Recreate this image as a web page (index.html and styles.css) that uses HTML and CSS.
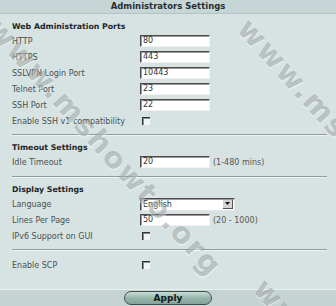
FILE: index.html
```html
<!DOCTYPE html>
<html>
<head>
<meta charset="utf-8">
<link rel="stylesheet" href="styles.css">
</head>
<body>
<div class="page">
  <div class="header">Administrators Settings</div>
  <div class="content">
    <div class="section first">
      <div class="heading">Web Administration Ports</div>
      <div class="row"><span class="label">HTTP</span><span class="input">80</span></div>
      <div class="row"><span class="label">HTTPS</span><span class="input">443</span></div>
      <div class="row"><span class="label">SSLVPN Login Port</span><span class="input">10443</span></div>
      <div class="row"><span class="label">Telnet Port</span><span class="input">23</span></div>
      <div class="row"><span class="label">SSH Port</span><span class="input">22</span></div>
      <div class="row"><span class="label">Enable SSH v1 compatibility</span><span class="check"></span></div>
    </div>
    <div class="divider d1"></div>
    <div class="section">
      <div class="heading">Timeout Settings</div>
      <div class="row"><span class="label">Idle Timeout</span><span class="input">20</span><span class="hint">(1-480 mins)</span></div>
    </div>
    <div class="divider d2"></div>
    <div class="section">
      <div class="heading">Display Settings</div>
      <div class="row"><span class="label">Language</span><span class="select"><span class="sel-text">English</span><span class="sel-btn"><svg width="5" height="3" viewBox="0 0 5 3"><path d="M0 0H5L2.5 3Z" fill="#111"/></svg></span></span></div>
      <div class="row"><span class="label">Lines Per Page</span><span class="input">50</span><span class="hint">(20 - 1000)</span></div>
      <div class="row"><span class="label">IPv6 Support on GUI</span><span class="check"></span></div>
    </div>
    <div class="divider d3"></div>
    <div class="section">
      <div class="row"><span class="label">Enable SCP</span><span class="check"></span></div>
    </div>
  </div>
  <div class="footer"><button class="apply">Apply</button></div>
  <div class="wm wm1">www.mshowto.org</div>
  <div class="wm wm2">www.mshowto.org</div>
  <div class="wm wm3">www.mshowto.org</div>
</div>
</body>
</html>
```
FILE: styles.css
```css
html, body {
  margin: 0;
  padding: 0;
}
body {
  width: 336px;
  height: 306px;
  overflow: hidden;
  background: #d7e3e3;
  font-family: "DejaVu Sans", Verdana, sans-serif;
  font-size: 8px;
  color: #4a4f50;
}
.page {
  position: relative;
  width: 336px;
  height: 306px;
  display: flex;
  flex-direction: column;
  overflow: hidden;
}
.header {
  height: 13px;
  line-height: 13px;
  background: #c6d5d5;
  border-bottom: 1px solid #b4c4c4;
  text-align: center;
  font-weight: bold;
  font-size: 8.5px;
  color: #263033;
}
.content {
  padding: 0 9px 0 12px;
}
.section.first {
  padding-top: 6px;
}
.heading {
  height: 13px;
  line-height: 13px;
  font-weight: bold;
  font-size: 7.8px;
  color: #1f2628;
}
.row {
  height: 16px;
  display: flex;
  align-items: center;
}
.label {
  width: 128px;
  flex: none;
}
.input {
  box-sizing: border-box;
  width: 70px;
  height: 12px;
  line-height: 10px;
  background: #fff;
  border-top: 1px solid #4a4a4a;
  border-left: 1px solid #4a4a4a;
  border-right: 1px solid #f2f2f2;
  border-bottom: 1px solid #f2f2f2;
  box-shadow: inset 1px 1px 0 #9a9a9a;
  padding-left: 2px;
  color: #333;
}
.hint {
  margin-left: 3px;
  color: #555;
}
.check {
  box-sizing: border-box;
  width: 8px;
  height: 8px;
  margin-left: 2px;
  background: #f3f5f5;
  border-top: 1px solid #333;
  border-left: 1px solid #333;
  box-shadow: inset 1px 1px 0 #8c8c8c;
}
.select {
  box-sizing: border-box;
  width: 95px;
  height: 13px;
  display: flex;
  background: #fff;
  border-top: 1px solid #4a4a4a;
  border-left: 1px solid #4a4a4a;
  border-right: 1px solid #e8e8e8;
  border-bottom: 1px solid #e8e8e8;
  box-shadow: inset 1px 1px 0 #9a9a9a;
}
.sel-text {
  flex: 1;
  line-height: 11px;
  padding-left: 2px;
  color: #333;
}
.sel-btn {
  width: 9px;
  margin: 1px 1px 1px 0;
  background: #d4d4d4;
  border-right: 1px solid #555;
  border-bottom: 1px solid #555;
  display: flex;
  align-items: center;
  justify-content: center;
}
.divider {
  height: 1px;
  background: #8f9c9c;
  box-shadow: 0 1px 0 #eef4f4;
}
.d1 { margin: 5px 0 6px; }
.d2 { margin: 6px 0 6px; }
.d3 { margin: 5px 0 7px; }
.footer {
  margin-top: auto;
  height: 17px;
  background: #c5d3d3;
  border-top: 1px solid #e9f0f0;
  box-sizing: border-box;
  display: flex;
  justify-content: center;
  align-items: flex-start;
  padding-top: 1px;
}
.apply {
  width: 88px;
  height: 14px;
  padding: 0;
  border: 1px solid #3e4f4c;
  border-radius: 7px;
  background: linear-gradient(#c9dcd6, #98b6ad 50%, #84a398);
  font-family: "DejaVu Sans", Verdana, sans-serif;
  font-weight: bold;
  font-size: 9px;
  line-height: 12px;
  color: #101a18;
}
.wm {
  position: absolute;
  left: 0;
  top: 0;
  font-family: "DejaVu Sans", sans-serif;
  font-weight: bold;
  font-size: 29px;
  letter-spacing: 2px;
  color: rgba(110, 120, 120, 0.38);
  text-shadow: 1px 1px 0 rgba(255, 255, 255, 0.45);
  transform-origin: 0 0;
  white-space: nowrap;
  pointer-events: none;
}
.wm1 { transform: translate(6px, 12px) rotate(48deg); }
.wm2 { transform: translate(256px, 12px) rotate(48deg); }
.wm3 { transform: translate(272px, 272px) rotate(48deg); }
```
